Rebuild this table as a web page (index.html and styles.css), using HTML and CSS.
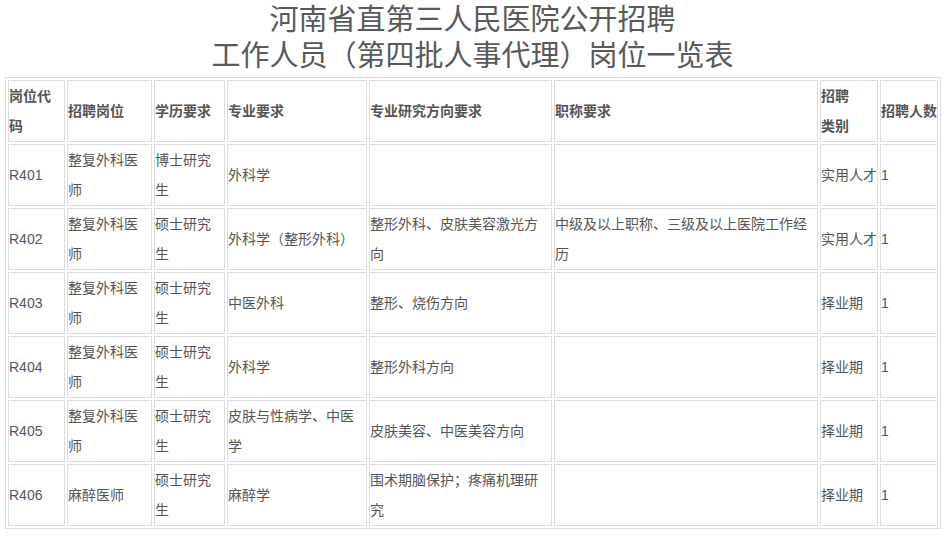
FILE: index.html
```html
<!DOCTYPE html>
<html lang="zh">
<head>
<meta charset="utf-8">
<link rel="stylesheet" href="styles.css">
</head>
<body>
<div class="page">
  <h1 class="title">河南省直第三人民医院公开招聘<br>工作人员（第四批人事代理）岗位一览表</h1>
  <table class="jobs">
    <thead>
      <tr>
        <th class="c1">岗位代码</th>
        <th class="c2">招聘岗位</th>
        <th class="c3">学历要求</th>
        <th class="c4">专业要求</th>
        <th class="c5">专业研究方向要求</th>
        <th class="c6">职称要求</th>
        <th class="c7">招聘<br>类别</th>
        <th class="c8">招聘人数</th>
      </tr>
    </thead>
    <tbody>
      <tr>
        <td>R401</td><td>整复外科医师</td><td>博士研究生</td><td>外科学</td><td></td><td></td><td>实用人才</td><td>1</td>
      </tr>
      <tr>
        <td>R402</td><td>整复外科医师</td><td>硕士研究生</td><td>外科学（整形外科）</td><td>整形外科、皮肤美容激光方向</td><td>中级及以上职称、三级及以上医院工作经历</td><td>实用人才</td><td>1</td>
      </tr>
      <tr>
        <td>R403</td><td>整复外科医师</td><td>硕士研究生</td><td>中医外科</td><td>整形、烧伤方向</td><td></td><td>择业期</td><td>1</td>
      </tr>
      <tr>
        <td>R404</td><td>整复外科医师</td><td>硕士研究生</td><td>外科学</td><td>整形外科方向</td><td></td><td>择业期</td><td>1</td>
      </tr>
      <tr>
        <td>R405</td><td>整复外科医师</td><td>硕士研究生</td><td>皮肤与性病学、中医学</td><td>皮肤美容、中医美容方向</td><td></td><td>择业期</td><td>1</td>
      </tr>
      <tr>
        <td>R406</td><td>麻醉医师</td><td>硕士研究生</td><td>麻醉学</td><td>围术期脑保护；疼痛机理研究</td><td></td><td>择业期</td><td>1</td>
      </tr>
    </tbody>
  </table>
</div>
</body>
</html>
```
FILE: styles.css
```css
html, body {
  margin: 0;
  padding: 0;
  background: #ffffff;
}
.page {
  padding: 2px 5px 0 5px;
  font-family: "Liberation Sans", "Noto Sans CJK SC", sans-serif;
  color: #555555;
}
.title {
  margin: 0 0 3px 0;
  font-size: 29px;
  line-height: 36px;
  font-weight: normal;
  text-align: center;
  color: #595959;
}
.jobs {
  width: 936px;
  table-layout: fixed;
  border-collapse: separate;
  border-spacing: 2px;
  border: 1px solid #dddddd;
  font-size: 14px;
  line-height: 30px;
}
.jobs th, .jobs td {
  box-sizing: border-box;
  border: 1px solid #dddddd;
  padding: 0;
  height: 62px;
  text-align: left;
  vertical-align: middle;
  word-break: break-all;
}
.jobs th {
  font-weight: bold;
  color: #555555;
}
.c1 { width: 57px; }
.c2 { width: 85px; }
.c3 { width: 71px; }
.c4 { width: 140px; }
.c5 { width: 183px; }
.c6 { width: 264px; }
.c7 { width: 58px; }
.c8 { width: 58px; }
```
